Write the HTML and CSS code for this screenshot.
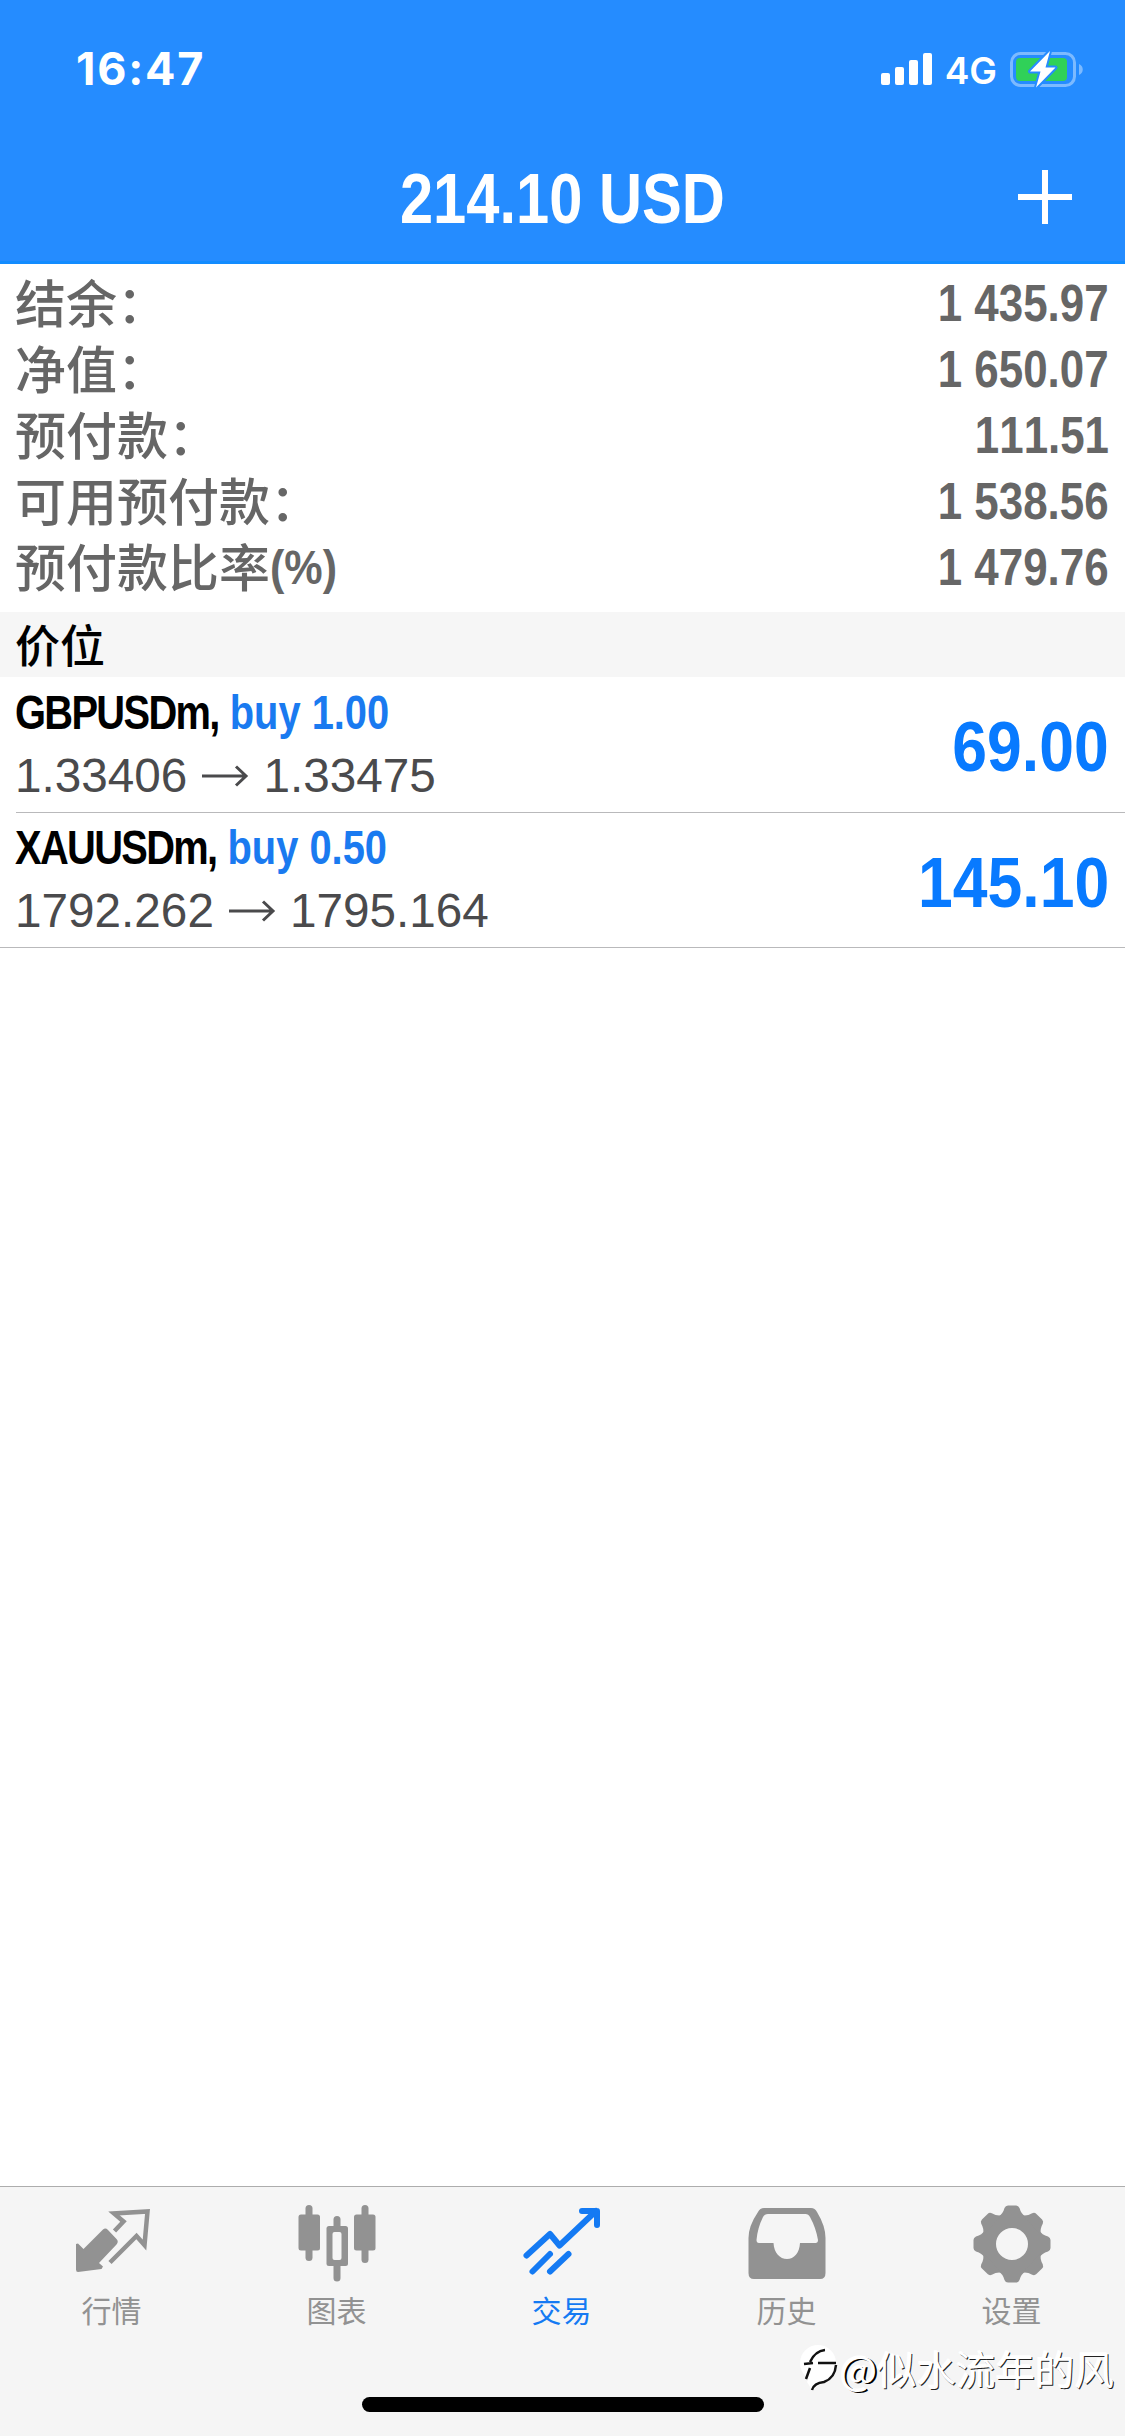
FILE: index.html
```
<!DOCTYPE html>
<html lang="zh-CN">
<head>
  <meta charset="utf-8">
  <meta name="viewport" content="width=device-width, initial-scale=1">
  <title>交易</title>
  <link rel="stylesheet" href="styles.css">
</head>
<body>

  <header class="header">
    <div class="status">
      <span class="time">16:47</span>
      <svg class="signal" width="51" height="32" viewBox="0 0 51 32" fill="#fff">
        <rect x="0" y="20" width="9" height="12" rx="2"/>
        <rect x="14" y="14" width="9" height="18" rx="2"/>
        <rect x="28" y="7" width="9" height="25" rx="2"/>
        <rect x="42" y="0" width="9" height="32" rx="2"/>
      </svg>
      <span class="network">4G</span>
      <svg class="battery" width="74" height="38" viewBox="0 0 74 38">
        <rect x="1.5" y="3.5" width="63" height="32" rx="9" fill="none" stroke="#7cbaff" stroke-width="3"/>
        <path d="M69 14c5 2 5 9 0 11z" fill="#7cbaff"/>
        <rect x="6" y="8" width="51" height="23" rx="4" fill="#30d158"/>
        <path d="M40 1L20 21.500h10.500L26 37.500 45.500 17.500H35.500z" fill="#fff" stroke="#258cff" stroke-width="4" paint-order="stroke" stroke-linejoin="round"/>
      </svg>
    </div>
    <div class="nav">
      <h1 class="title narrow">214.10 USD</h1>
      <svg class="add" width="54" height="54" viewBox="0 0 54 54" stroke="#fff" stroke-width="6">
        <path d="M27 0v54M0 27h54"/>
      </svg>
    </div>
  </header>

  <dl class="account">
    <div class="row"><dt>结余：</dt><dd class="narrow">1 435.97</dd></div>
    <div class="row"><dt>净值：</dt><dd class="narrow">1 650.07</dd></div>
    <div class="row"><dt>预付款：</dt><dd class="narrow">111.51</dd></div>
    <div class="row"><dt>可用预付款：</dt><dd class="narrow">1 538.56</dd></div>
    <div class="row"><dt>预付款比率<span class="percent narrow">(%)</span></dt><dd class="narrow">1 479.76</dd></div>
  </dl>

  <h2 class="section">价位</h2>

  <ul class="positions">
    <li class="position">
      <div class="order">
        <p class="symbol narrow"><span class="name">GBPUSDm,</span> <span class="buy">buy 1.00</span></p>
        <p class="prices">1.33406
          <svg class="arrow" width="46" height="22" viewBox="0 0 46 22"><path d="M0 11h44M34 1.500l10 9.500-10 9.500"/></svg>
          1.33475</p>
      </div>
      <span class="profit narrow">69.00</span>
    </li>
    <li class="position">
      <div class="order">
        <p class="symbol narrow"><span class="name">XAUUSDm,</span> <span class="buy">buy 0.50</span></p>
        <p class="prices">1792.262
          <svg class="arrow" width="46" height="22" viewBox="0 0 46 22"><path d="M0 11h44M34 1.500l10 9.500-10 9.500"/></svg>
          1795.164</p>
      </div>
      <span class="profit narrow">145.10</span>
    </li>
  </ul>

  <footer class="footer">
    <nav class="tabs">
      <a class="tab">
        <svg width="80" height="80" viewBox="0 0 80 80">
          <path d="M31 23.500Q33.500 21.500 36 24L44.500 33Q47 35.500 44.500 38.500L27 57 31 60.500 29.500 63 6 66Q4 66 4 63.500V38L6 37.500 11.500 43z" fill="currentColor"/>
          <path d="M42.500 25L51.500 15.500 42 7.500 75.500 5.500 72.500 39 64.500 30 38 56.500" fill="none" stroke="currentColor" stroke-width="4.500"/>
        </svg>
        行情
      </a>
      <a class="tab">
        <svg width="80" height="80" viewBox="0 0 80 80" fill="currentColor">
          <rect x="8.500" y="-1" width="7" height="56" rx="3.500"/>
          <rect x="1.500" y="8.500" width="21.500" height="36" rx="2.500"/>
          <rect x="64.500" y="-1" width="7" height="58" rx="3.500"/>
          <rect x="57" y="8.500" width="21.500" height="36" rx="2.500"/>
          <rect x="36.500" y="10" width="7" height="65.500" rx="3.500"/>
          <rect x="29.500" y="20" width="21.500" height="40" rx="2.500"/>
          <rect x="35.500" y="26" width="9" height="28" rx="2" fill="#f5f5f5"/>
        </svg>
        图表
      </a>
      <a class="tab active">
        <svg width="80" height="80" viewBox="0 0 80 80" fill="none" stroke="currentColor" stroke-width="6" stroke-linecap="round" stroke-linejoin="round">
          <path d="M4.500 49.500L28 28 37.500 39.500 74 5M60 5H75V19M10.500 65.500L28 48M28 65.500L46.500 48"/>
        </svg>
        交易
      </a>
      <a class="tab">
        <svg width="80" height="80" viewBox="0 0 80 80" fill="currentColor" fill-rule="evenodd">
          <path d="M17 2H64Q68 2 70 6 78.500 20 78.500 32V67Q78.500 73 73 73H7Q1.500 73 1.500 67V32Q1.500 20 11 6 13 2 17 2zM21 8Q17.500 8 16 11 10.500 22 9.500 34 9.500 37 12 37H26.500C27 47 33 53 40 53S52.500 47 53 37H68.500Q71 37 71 34 69 22 63 11 61.500 8 58.500 8z"/>
        </svg>
        历史
      </a>
      <a class="tab">
        <svg width="80" height="80" viewBox="-40 -40 80 80" fill="currentColor">
          <g transform="translate(0 -2)">
            <circle r="23" fill="none" stroke="currentColor" stroke-width="14"/>
            <g id="teeth">
              <path id="tooth" d="M-14-27Q-9-30-7.500-36-6.500-38.500-4-38.500H4Q6.500-38.500 7.500-36 9-30 14-27z"/>
              <use href="#tooth" transform="rotate(45)"/>
              <use href="#tooth" transform="rotate(90)"/>
              <use href="#tooth" transform="rotate(135)"/>
            </g>
            <use href="#teeth" transform="rotate(180)"/>
          </g>
        </svg>
        设置
      </a>
    </nav>
    <div class="home-bar"></div>
    <div class="watermark">
      <svg width="40" height="48" viewBox="0 0 40 48">
        <circle cx="18" cy="19" r="18" fill="#fff"/>
        <path d="M14 24L7 38 12 46 24 38z" fill="#fff"/>
        <path d="M6 35L10 24M10 18Q15 7 25 6M4 20L13 19M18 19H36M36 21Q35 34 24 38 14 39 12 46" fill="none" stroke="#111" stroke-width="2.500"/>
      </svg>
      <span><span class="at">@</span>似水流年的风</span>
    </div>
  </footer>

</body>
</html>
```
FILE: styles.css
```
* {
  box-sizing: border-box;
  margin: 0;
  padding: 0;
}
body {
  display: flex;
  flex-direction: column;
  height: 2436px;
  background: #fff;
  font-family: 'Liberation Sans', 'Noto Sans CJK SC', sans-serif;
  font-kerning: none;
  overflow: hidden;
}
svg {
  display: block;
  flex: none;
  overflow: visible;
}
ul {
  list-style: none;
}

/* condensed bold, squeezed from the regular width */
.narrow {
  font-family: 'Liberation Sans', sans-serif;
  font-weight: bold;
  white-space: nowrap;
  transform: scaleX(.86);
  transform-origin: 100% 50%;
}

/* header */
.header {
  height: 264px;
  color: #fff;
  background: #258cff;
  border-bottom: 3px solid #128cff;
}
.status {
  display: flex;
  align-items: center;
  height: 138px;
  padding: 0 41px 0 76px;
}
.time {
  flex: 1;
  font: 700 45px/54px Inter, sans-serif;
  letter-spacing: 1.8px;
}
.network {
  margin: 3px 13px 0 13px;
  font: 600 37px/44px Inter, sans-serif;
}
.nav {
  display: grid;
  grid-template-columns: 1fr auto 1fr;
  align-items: center;
  height: 122px;
  padding: 0 53px;
}
.title {
  grid-column: 2;
  font-size: 71px;
  line-height: 80px;
  transform: scaleX(.84);
  transform-origin: 50% 50%;
}
.add {
  justify-self: end;
  margin-bottom: 5px;
}

/* account summary */
.account {
  height: 348px;
  padding: 4px 16px 0;
  color: #666;
}
.row {
  display: flex;
  justify-content: space-between;
  height: 66px;
  font-size: 51px;
  line-height: 66px;
}
.row dt {
  margin-left: -1px;
  font-family: 'Noto Sans CJK SC', sans-serif;
  font-weight: 500;
}
.row dd {
  padding-top: 3px;
}
.percent {
  display: inline-block;
  font-size: 49px;
  line-height: 50px;
  vertical-align: 3px;
  transform: scaleX(.88);
  transform-origin: 0 50%;
}
.section {
  height: 65px;
  padding-left: 15px;
  background: #f6f6f6;
  font: 500 45px/63px 'Noto Sans CJK SC', sans-serif;
}

/* open positions */
.positions {
  border-bottom: 1px solid #b9b9bb;
}
.position {
  display: flex;
  justify-content: space-between;
  align-items: center;
  height: 135px;
  margin-left: 16px;
  padding-right: 16px;
}
.position + .position {
  border-top: 1px solid #b9b9bb;
}
.symbol {
  margin-left: -1px;
  font-size: 48px;
  line-height: 62px;
  transform: scaleX(.83);
  transform-origin: 0 50%;
}
.name {
  letter-spacing: -2px;
}
.buy {
  color: #1a7af0;
}
.prices {
  display: flex;
  align-items: center;
  gap: 15px;
  margin-left: -1px;
  color: #4a4a4c;
  font-size: 47.7px;
  line-height: 64px;
}
.arrow {
  fill: none;
  stroke: #4a4a4c;
  stroke-width: 3;
}
.profit {
  padding-top: 4px;
  color: #087aff;
  font-size: 71px;
  transform: scaleX(.88);
}

/* tab bar */
.footer {
  position: relative;
  height: 250px;
  margin-top: auto;
  border-top: 1px solid #adadad;
  background: #f5f5f5;
}
.tabs {
  display: grid;
  grid-template-columns: repeat(5, 225px);
  padding-top: 19px;
  margin-left: -1px;
}
.tab {
  display: flex;
  flex-direction: column;
  align-items: center;
  color: #929292;
  font: 30px/47px 'Noto Sans CJK SC', sans-serif;
}
.tab.active {
  color: #147af3;
}
.home-bar {
  width: 402px;
  height: 15px;
  margin: 64px auto 0;
  border-radius: 8px;
  background: #000;
}
.watermark {
  position: absolute;
  right: 11px;
  bottom: 40px;
  display: flex;
  align-items: center;
  color: #fff;
  font: 39.5px/56px 'Noto Sans CJK SC', sans-serif;
  text-shadow: 1px 1px 0 #222, -1px -1px 0 #fff;
}
.at {
  text-shadow: 2px 1px 0 #000, -1px -1px 0 #fff;
}
```
